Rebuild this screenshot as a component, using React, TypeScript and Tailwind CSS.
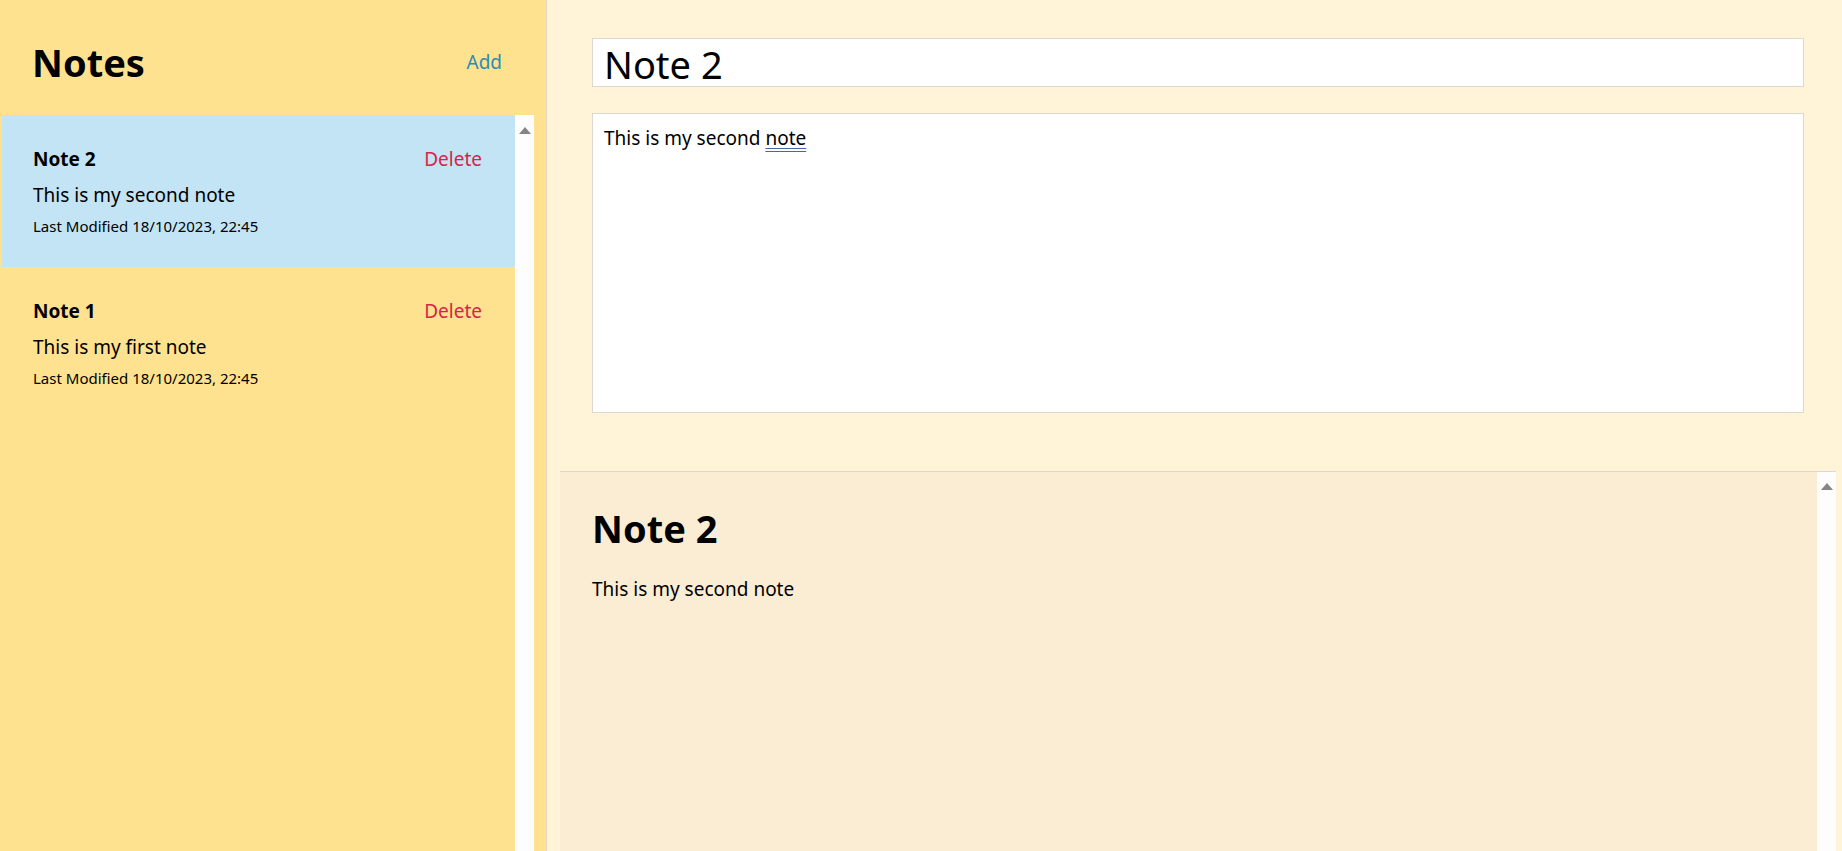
import { useState } from 'react'

type Note = {
  id: number
  title: string
  body: string
  modified: string
}

const initialNotes: Note[] = [
  { id: 2, title: 'Note 2', body: 'This is my second note', modified: '18/10/2023, 22:45' },
  { id: 1, title: 'Note 1', body: 'This is my first note', modified: '18/10/2023, 22:45' },
]

function FakeScrollbar({ top }: { top: string }) {
  return (
    <div className={`w-[19px] shrink-0 bg-[#fdfdfd] flex justify-center ${top}`}>
      <div className="w-0 h-0 border-l-[6px] border-r-[6px] border-b-[7px] border-l-transparent border-r-transparent border-b-[#858585]"></div>
    </div>
  )
}

export default function App() {
  const [notes] = useState(initialNotes)
  const [activeId, setActiveId] = useState(2)
  const active = notes.find((n) => n.id === activeId) ?? notes[0]

  return (
    <div className="flex h-screen w-full overflow-hidden text-black font-['Noto_Sans','Open_Sans',sans-serif]">
      {/* Sidebar */}
      <aside className="w-[546px] shrink-0 bg-[#ffe290] flex flex-col">
        <header className="h-[115px] shrink-0 pt-[9px] pl-[32px] pr-[44px] flex items-center justify-between">
          <h1 className="text-[38px] leading-[52px] font-bold">Notes</h1>
          <button className="text-[19px] leading-[26px] text-[#2a8db5]">Add</button>
        </header>

        <div className="flex-1 min-h-0 flex ml-[2px] mr-[12px]">
          <ul className="flex-1">
            {notes.map((note) => (
              <li
                key={note.id}
                onClick={() => setActiveId(note.id)}
                className={`h-[152px] pt-[31px] pl-[31px] pr-[33px] cursor-pointer ${
                  note.id === activeId ? 'bg-[#c3e4f5]' : ''
                }`}
              >
                <div className="flex items-center justify-between h-[26px]">
                  <strong className="text-[19px] leading-[26px] font-bold">{note.title}</strong>
                  <button className="text-[19px] leading-[26px] text-[#d8234a]">Delete</button>
                </div>
                <p className="mt-[10px] text-[19px] leading-[26px]">{note.body}</p>
                <small className="block mt-[8px] text-[15px] leading-[20px]">Last Modified {note.modified}</small>
              </li>
            ))}
          </ul>
          <FakeScrollbar top="pt-[12px]" />
        </div>
      </aside>

      {/* Main */}
      <main className="flex-1 min-w-0 flex flex-col bg-[#fff3d8] border-l border-[#e6dbc2]">
        <div className="pt-[38px] pl-[45px] pr-[38px] pb-[58px] flex flex-col">
          <input
            value={active.title}
            readOnly
            className="h-[49px] w-full bg-white border border-[#ddd8cf] pl-[11px] pt-[3px] text-[38px] outline-none"
          />
          <div className="mt-[26px] h-[300px] w-full bg-white border border-[#ddd8cf] pt-[11px] pl-[11px] text-[19px] leading-[26px]">
            This is my second{' '}
            <span className="underline decoration-double decoration-[#4a63b0] underline-offset-[3px]">note</span>
          </div>
        </div>

        <section className="flex-1 min-h-0 ml-[13px] mr-[6px] flex border-t border-[#ddd8cf]">
          <div className="flex-1 bg-[#faedd4] pt-[30px] pl-[32px]">
            <h2 className="text-[38px] leading-[52px] font-bold">{active.title}</h2>
            <p className="mt-[22px] text-[19px] leading-[26px]">{active.body}</p>
          </div>
          <FakeScrollbar top="pt-[11px]" />
        </section>
      </main>
    </div>
  )
}
